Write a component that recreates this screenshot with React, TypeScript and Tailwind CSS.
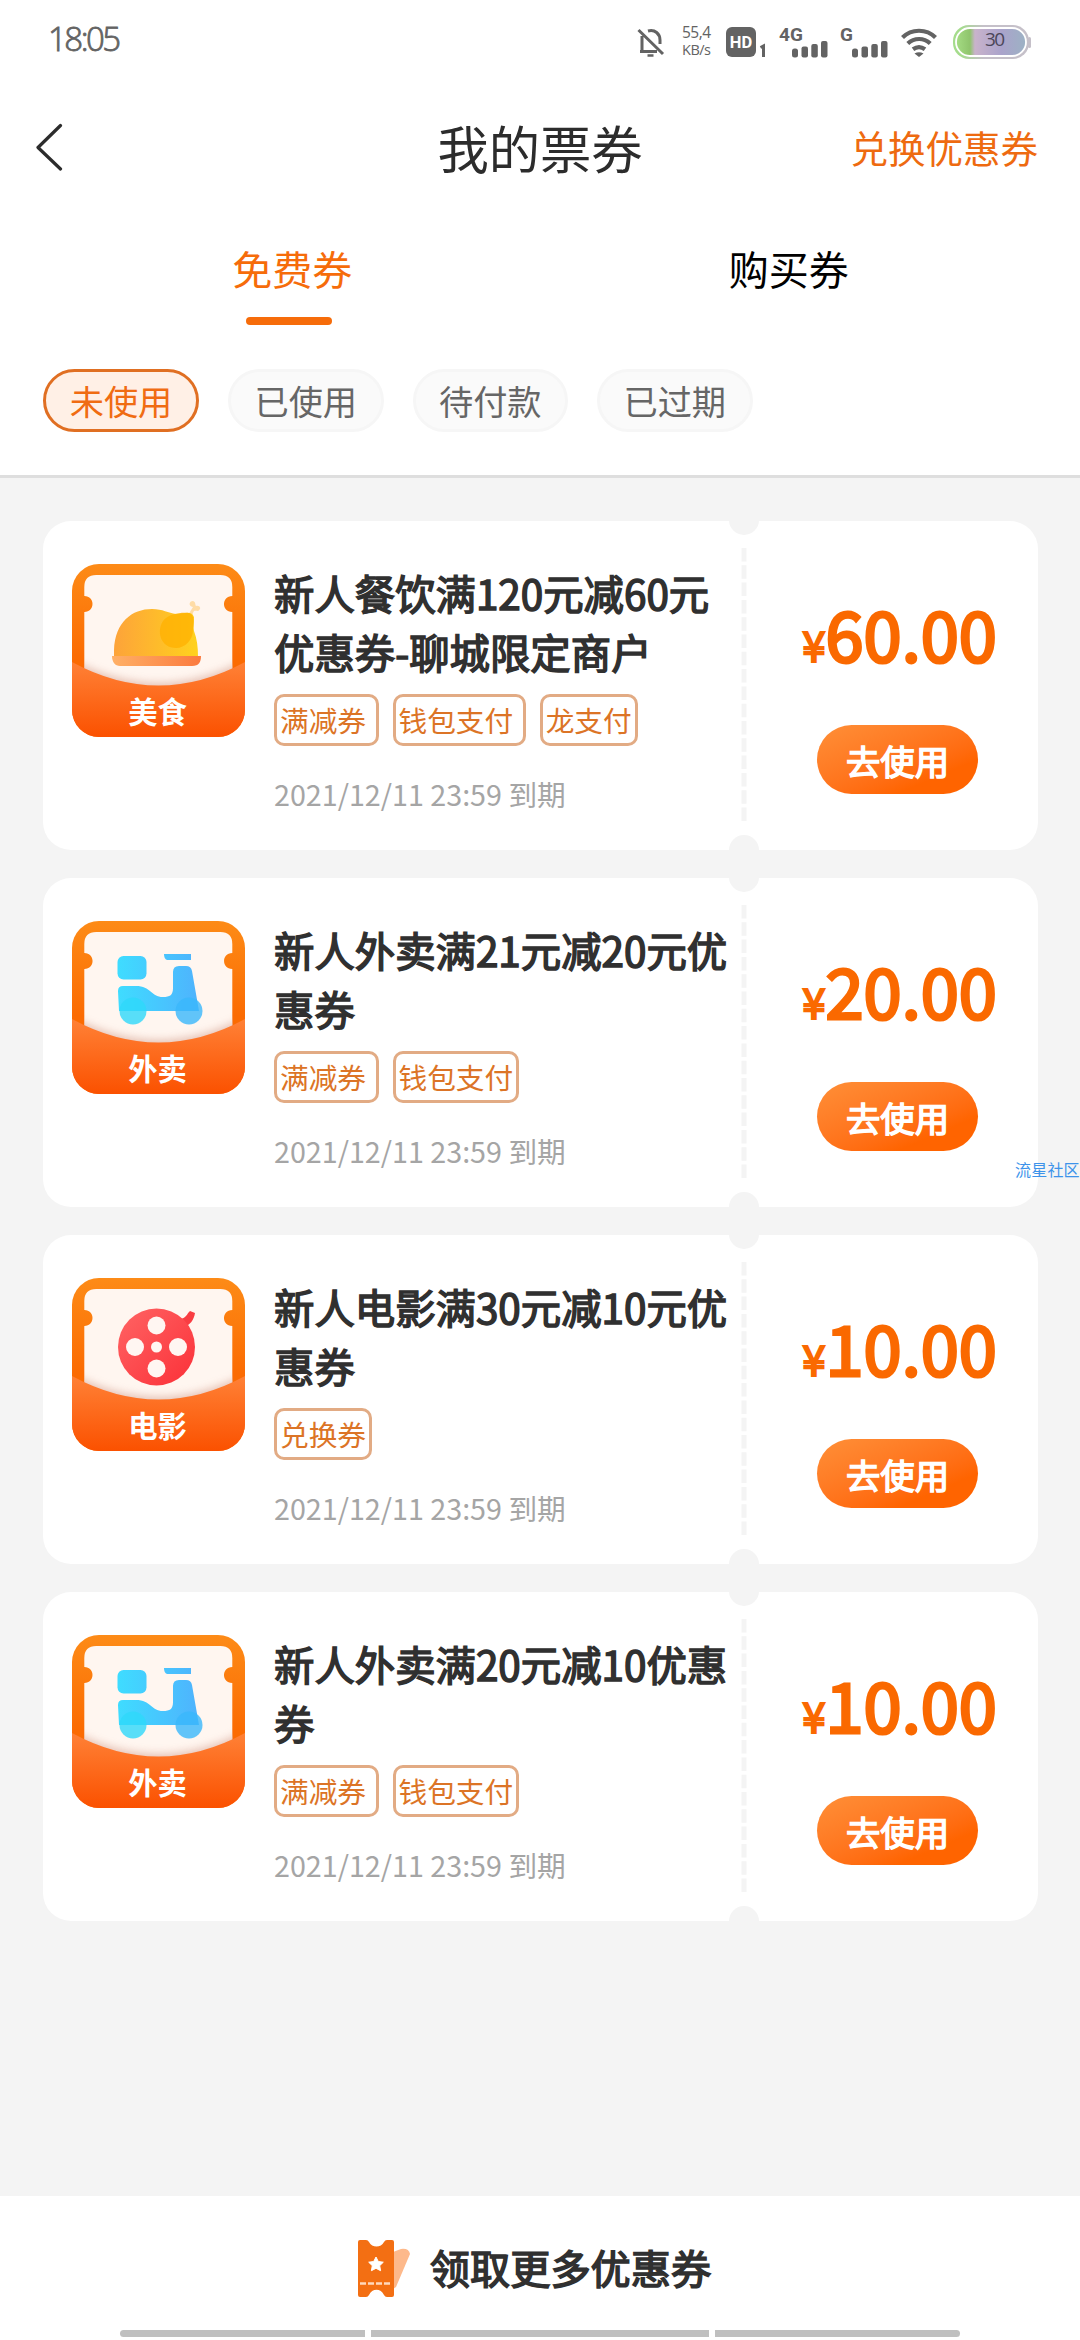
import React from 'react'

type CouponKind = 'food' | 'takeout' | 'movie'

interface Coupon {
  kind: CouponKind
  label: string
  title: string[]
  tags: string[]
  price: string
}

const expireText = '2021/12/11 23:59 到期'

const filters = ['未使用', '已使用', '待付款', '已过期']

const coupons: Coupon[] = [
  { kind: 'food', label: '美食', title: ['新人餐饮满120元减60元', '优惠券-聊城限定商户'], tags: ['满减券', '钱包支付', '龙支付'], price: '60.00' },
  { kind: 'takeout', label: '外卖', title: ['新人外卖满21元减20元优', '惠券'], tags: ['满减券', '钱包支付'], price: '20.00' },
  { kind: 'movie', label: '电影', title: ['新人电影满30元减10元优', '惠券'], tags: ['兑换券'], price: '10.00' },
  { kind: 'takeout', label: '外卖', title: ['新人外卖满20元减10优惠', '券'], tags: ['满减券', '钱包支付'], price: '10.00' },
]

function Signal() {
  return (
    <svg width="36" height="17" viewBox="0 0 36 17" fill="#636363">
      <rect x="0" y="7.5" width="6" height="9" rx="2.5" />
      <rect x="9.5" y="5.5" width="6.5" height="11" rx="2" />
      <rect x="19.3" y="3" width="6.5" height="13.5" rx="2" />
      <rect x="29" y="0" width="6.5" height="16.5" rx="2" />
    </svg>
  )
}

function StatusBar() {
  return (
    <div className="flex h-[84px] shrink-0 items-start justify-between pl-[48px] pr-[49px] text-[#636363]">
      <span className="mt-[19px] font-['Open_Sans',sans-serif] text-[33px] font-light leading-[40px] tracking-[-2.5px] [-webkit-text-stroke:0.8px]">18:05</span>
      <div className="mt-[25px] flex h-[34px] items-start">
        <svg width="28" height="34" viewBox="0 0 28 34" fill="none" stroke="#636363" strokeWidth="3">
          <path d="M1.5 5l24.5 24M5 11v15.500h15M3 26.500h3M11 6c7-2 12 3 12 9v4" />
          <path d="M10.500 30.500h6" strokeWidth="2.500" />
        </svg>
        <div className="ml-[17px] flex w-[31px] flex-col whitespace-nowrap font-['Open_Sans',sans-serif] text-[15.500px] leading-[18px] tracking-[-0.5px]">
          <span className="-mt-[2px]">55,4</span>
          <span className="text-[14.500px]">KB/s</span>
        </div>
        <svg className="ml-[13px]" width="42" height="34" viewBox="0 0 42 34">
          <rect x="0" y="2" width="30" height="30" rx="6" fill="#636363" />
          <text x="15" y="22.500" textAnchor="middle" fontFamily="Roboto, sans-serif" fontWeight="700" fontSize="16.500" fill="#fff">HD</text>
          <path d="M34.500 22.500l3-1.500v11" fill="none" stroke="#636363" strokeWidth="3" />
        </svg>
        <div className="relative ml-[24px] h-[34px] w-[36px]">
          <span className="absolute -left-[13px] top-0 font-['Roboto',sans-serif] text-[19px] font-bold leading-[20px]">4G</span>
          <div className="mt-[16px]"><Signal /></div>
        </div>
        <div className="relative ml-[24px] h-[34px] w-[36px]">
          <span className="absolute -left-[12px] top-0 font-['Roboto',sans-serif] text-[19px] font-bold leading-[20px]">G</span>
          <div className="mt-[16px]"><Signal /></div>
        </div>
        <svg className="ml-[13px]" width="36" height="34" viewBox="0 0 36 34" fill="none" stroke="#636363" strokeWidth="4.200">
          <path d="M1.500 12.500c9-9 24-9 33 0M6.800 18.500c6.500-6 16-6 22.400 0M12 24.300c4-3 8-3 12 0" />
          <path d="M13.500 28.500q4.500-2.500 9 0L18 32z" fill="#636363" stroke="none" />
        </svg>
        <svg className="ml-[16px]" width="78" height="34" viewBox="0 0 78 34">
          <defs>
            <linearGradient id="battery">
              <stop offset="0" stopColor="#a5dc84" />
              <stop offset=".2" stopColor="#8fc46c" />
              <stop offset=".27" stopColor="#c9b3cb" />
              <stop offset=".65" stopColor="#aaa3cb" />
              <stop offset="1" stopColor="#9cb2c4" />
            </linearGradient>
            <linearGradient id="batteryEdge">
              <stop offset=".1" stopColor="#a5dc8c" />
              <stop offset=".4" stopColor="#c5c0c9" />
            </linearGradient>
          </defs>
          <rect x="75" y="12" width="3" height="11" rx="1.500" fill="#c5c0c9" />
          <rect x="0" y="0" width="76" height="34" rx="16" fill="url(#batteryEdge)" />
          <rect x="3" y="3" width="70" height="28" rx="14" fill="url(#battery)" stroke="#fff" strokeWidth="1.800" />
          <text x="42" y="21" textAnchor="middle" fontFamily="Open Sans, sans-serif" fontSize="19" fill="#4c4659" textLength="20">30</text>
        </svg>
      </div>
    </div>
  )
}

function Header() {
  return (
    <div className="grid h-[130px] shrink-0 grid-cols-3 items-start px-[36px]">
      <svg className="mt-[39px]" width="28" height="48" viewBox="0 0 28 48" fill="none" stroke="#2c2c2c" strokeWidth="3.200" strokeLinecap="round" strokeLinejoin="round">
        <path d="M24.500 2.500L2 24.500l22.500 21.500" />
      </svg>
      <h1 className="mt-[27px] text-center text-[51.300px] leading-[72px] text-[#2c2c2c]">我的票券</h1>
      <a className="mt-[33px] pr-[6px] text-right text-[37.500px] leading-[60px] text-[#ee6a10]">兑换优惠券</a>
    </div>
  )
}

function Tabs() {
  return (
    <div className="grid h-[155px] shrink-0 grid-cols-2 pl-[44px] pr-[43px]">
      <div className="flex flex-col items-center">
        <span className="mt-[24px] text-[40px] leading-[60px] text-[#f66c0a]">免费券</span>
        <span className="mr-[6px] mt-[19px] h-[8px] w-[86px] rounded-[4px] bg-[#f66c0a]" />
      </div>
      <div className="flex flex-col items-center">
        <span className="mt-[24px] text-[40px] leading-[60px] text-black">购买券</span>
      </div>
    </div>
  )
}

function KindDrawing({ kind }: { kind: CouponKind }) {
  if (kind === 'food') {
    return (
      <g>
        <defs>
          <linearGradient id="chicken">
            <stop offset="0" stopColor="#fda33a" />
            <stop offset="1" stopColor="#ffd21d" />
          </linearGradient>
          <linearGradient id="plate">
            <stop offset="0" stopColor="#ffb066" />
            <stop offset="1" stopColor="#fb7a3e" />
          </linearGradient>
        </defs>
        <path d="M116 51l5-8c-5-1-4-6 0-6 3 1 2 4 3 5 4-1 6 3 2 5-3 0-4-1-5 2l-2 5z" fill="#ffdca6" />
        <path d="M42 93V86C43 58 60 45 80 45c11 0 16 4 24 5 8 0 15-4 18 3 0 6-1 10 0 14 3 8 4 16 4 26z" fill="url(#chicken)" />
        <path d="M91 57C97 49 111 48 117 49c6 2 5 10 4 17 0 10-8 18-17 18-15 0-20-16-13-27z" fill="#ffb000" opacity=".75" />
        <path d="M40 92h89c0 6-2 10-9 10H48c-5 0-8-4-8-10z" fill="url(#plate)" />
      </g>
    )
  }
  if (kind === 'takeout') {
    return (
      <g>
        <defs>
          <linearGradient id="scooter" gradientUnits="userSpaceOnUse" x1="46" y1="0" x2="128" y2="0">
            <stop offset="0" stopColor="#3fdcff" />
            <stop offset="1" stopColor="#4fb2fd" />
          </linearGradient>
        </defs>
        <rect x="45.500" y="35" width="29" height="23.500" rx="6" fill="url(#scooter)" />
        <path d="M92 33h27v6H95q-3-1-3-6z" fill="url(#scooter)" />
        <path d="M46 70q0-5 5-5h13c15 0 15 11 27 11 7 0 10-2 10-9V51q0-6 6-6h7q5 0 6 5l7 40H47z" fill="url(#scooter)" />
        <circle cx="61" cy="90" r="13.500" fill="#2ed8fa" opacity=".8" />
        <circle cx="117" cy="90" r="13.500" fill="#3ab8fb" opacity=".8" />
      </g>
    )
  }
  return (
    <g>
      <defs>
        <linearGradient id="reel" x1="0" y1="0" x2="1" y2="1">
          <stop offset="0" stopColor="#ff6464" />
          <stop offset="1" stopColor="#fb3038" />
        </linearGradient>
      </defs>
      <path d="M106 41c8 1 9-6 12-8l5 2c-1 7-5 12-11 14z" fill="#f93d42" />
      <circle cx="84.500" cy="69" r="38.500" fill="url(#reel)" />
      <g fill="#fff6f2">
        <circle cx="84.500" cy="47.500" r="9" />
        <circle cx="63" cy="69" r="9" />
        <circle cx="106" cy="69" r="9" />
        <circle cx="84.500" cy="90.500" r="9" />
        <circle cx="84.500" cy="69" r="5.500" />
      </g>
    </g>
  )
}

function CouponIcon({ kind, label }: { kind: CouponKind; label: string }) {
  return (
    <svg className="mt-[43px] shrink-0" width="173" height="173" viewBox="0 0 173 173">
      <defs>
        <linearGradient id="frame" x1="0" y1="0" x2="0" y2="1">
          <stop offset="0" stopColor="#fd8b17" />
          <stop offset=".55" stopColor="#fb6b02" />
        </linearGradient>
        <linearGradient id="pocket" x1="0" y1="0" x2="0" y2="1">
          <stop offset="0" stopColor="#ff8136" />
          <stop offset="1" stopColor="#fb5100" />
        </linearGradient>
        <clipPath id="iconClip"><rect width="173" height="173" rx="27" /></clipPath>
        <clipPath id="ticketClip"><path d="M12 11h149v160H12z" /></clipPath>
        <filter id="soft"><feGaussianBlur stdDeviation="4" /></filter>
      </defs>
      <g clipPath="url(#iconClip)">
        <rect width="173" height="173" fill="url(#frame)" />
        <path d="M12.300 23q0-12 12-12h124q12 0 12 12v9c-11 0-11 16 0 16v90h-148V48c11 0 11-16 0-16z" fill="#fff6f0" />
        <path clipPath="url(#ticketClip)" d="M0 96Q86.500 142 173 96V140H0z" fill="#d9a898" opacity=".7" filter="url(#soft)" />
        <KindDrawing kind={kind} />
        <path d="M0 98Q86.500 145 173 98V173H0z" fill="url(#pocket)" />
      </g>
      <text x="85.500" y="159" textAnchor="middle" fontFamily="Noto Sans CJK SC, sans-serif" fontWeight="700" fontSize="29.300" fill="#fff">{label}</text>
    </svg>
  )
}

function CouponCard({ coupon }: { coupon: Coupon }) {
  return (
    <div className="relative flex h-[328.500px] overflow-hidden rounded-[28px] bg-white pl-[29px]">
      <CouponIcon kind={coupon.kind} label={coupon.label} />
      <div className="ml-[29px] w-[466px] shrink-0 pt-[42px]">
        <div className="whitespace-nowrap text-[40.400px] leading-[59px] text-[#303030] [-webkit-text-stroke:1.500px_#303030]">
          {coupon.title.map((line) => (
            <p key={line}>{line}</p>
          ))}
        </div>
        <div className="mt-[13px] flex gap-[14px]">
          {coupon.tags.map((tag, i) => (
            <span key={tag} className="h-[52px] whitespace-pre rounded-[10px] border-[3px] border-[#e2ab84] px-[3px] text-[28.700px] leading-[45px] text-[#dc7426]">
              {i < coupon.tags.length - 1 ? tag + ' ' : tag}
            </span>
          ))}
        </div>
        <p className="mt-[28px] text-[28.700px] leading-[40px] text-[#a5a5a5]">{expireText}</p>
      </div>
      {/* perforation */}
      <svg className="mt-[26px] shrink-0" width="7" height="276" viewBox="0 0 7 276">
        <path d="M4 1V276" stroke="#f4f4f4" strokeWidth="5" strokeDasharray="13.500 3.800" />
      </svg>
      <span className="absolute -top-[16px] left-[686px] h-[30px] w-[30px] rounded-full bg-[#f4f4f4]" />
      <span className="absolute -bottom-[15px] left-[686px] h-[30px] w-[30px] rounded-full bg-[#f4f4f4]" />
      <div className="flex flex-1 flex-col items-center pl-[10px]">
        <div className="mt-[62px] flex h-[100px] items-baseline pl-[4px] leading-[100px] text-[#fa6900]">
          <span className="text-[42px] [-webkit-text-stroke:2px_#fa6900]">¥</span>
          <span className="text-[68.500px] [-webkit-text-stroke:3px_#fa6900]">{coupon.price}</span>
        </div>
        <button className="mt-[42px] h-[69px] w-[161px] rounded-full bg-gradient-to-br from-[#ff8f37] to-[#ff6400] to-75% text-[34.300px] leading-[66px] text-white [-webkit-text-stroke:1.500px_#fff]">去使用</button>
      </div>
    </div>
  )
}

function TicketIcon() {
  return (
    <svg width="54" height="58" viewBox="0 0 54 58">
      <path d="M35 12l8-3q8-1 9 5L38 47l-3 2z" fill="#fdb98b" />
      <path d="M2 0h6q2 0 3 2c3 6 12 6 15 0q1-2 3-2h5q2 0 2 2v53q0 2-2 2h-5q-2 0-3-2c-3-7-12-7-15 0q-1 2-3 2H2q-2 0-2-2V2q0-2 2-2z" fill="#f36f13" />
      <path d="M18 17l2.300 4.500 5 .7-3.600 3.500.9 5-4.600-2.400-4.600 2.400.9-5-3.600-3.500 5-.7z" fill="#fff" stroke="#fff" strokeWidth="1" />
      <path d="M2 43.500h32" stroke="#ffd9bd" strokeWidth="2.500" strokeDasharray="6 2" />
    </svg>
  )
}

function Footer() {
  return (
    <div className="flex h-[144px] shrink-0 flex-col justify-between bg-white pb-[3px]">
      <div className="mt-[41px] flex items-start justify-center gap-[18px] pr-[11px]">
        <div className="pt-[3px]"><TicketIcon /></div>
        <span className="text-[40.200px] leading-[60px] text-[#303030] [-webkit-text-stroke:1.500px_#303030]">领取更多优惠券</span>
      </div>
      <div className="flex justify-center gap-[6px]">
        <span className="h-[7px] w-[245px] rounded-l-full bg-[#bfbfbf]" />
        <span className="h-[7px] w-[338px] bg-[#bfbfbf]" />
        <span className="h-[7px] w-[245px] rounded-r-full bg-[#bfbfbf]" />
      </div>
    </div>
  )
}

function App() {
  return (
    <div className="relative flex h-[2340px] w-[1080px] flex-col overflow-hidden bg-[#f4f4f4] font-['Noto_Sans_CJK_SC',sans-serif]">
      <div className="flex h-[478px] shrink-0 flex-col border-b-[3px] border-[#dedede] bg-white">
        <StatusBar />
        <Header />
        <Tabs />
        <div className="flex gap-[29px] pl-[43px]">
          {filters.map((name, i) => (
            <span
              key={name}
              className={
                i === 0
                  ? 'h-[63px] w-[156px] rounded-full border-[3px] border-[#e06f22] bg-[#fff0e6] text-center text-[34.200px] leading-[57px] text-[#f06c12]'
                  : 'h-[63px] w-[155.500px] rounded-full border-[3px] border-[#f6f6f6] bg-[#fafafa] text-center text-[34.200px] leading-[57px] text-[#666]'
              }
            >
              {name}
            </span>
          ))}
        </div>
      </div>

      <div className="flex flex-1 flex-col gap-[28.600px] pl-[43px] pr-[42px] pt-[43px]">
        {coupons.map((coupon, i) => (
          <CouponCard key={i} coupon={coupon} />
        ))}
      </div>

      <Footer />

      <span className="absolute left-[1015px] top-[1157px] whitespace-nowrap text-[16px] leading-[25px] tracking-[0.2px] text-[#3d93ea]">流星社区</span>
    </div>
  )
}

export default App
